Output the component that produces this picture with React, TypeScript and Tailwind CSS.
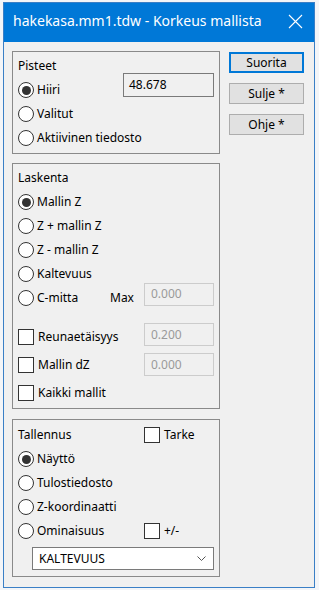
import React from "react";

const font = { fontFamily: '"Noto Sans", "Liberation Sans", sans-serif' };

const Radio = ({ checked, label }: { checked?: boolean; label: string }) => (
  <div className="flex items-center h-[24px]">
    <span className="w-[16px] h-[16px] rounded-full border border-[#333] bg-white flex items-center justify-center shrink-0">
      {checked && <span className="w-[9px] h-[9px] rounded-full bg-[#333]" />}
    </span>
    <span className="ml-[3px]">{label}</span>
  </div>
);

const Check = ({ label }: { label: string }) => (
  <div className="flex items-center">
    <span className="w-[16px] h-[16px] border border-[#333] bg-white shrink-0" />
    <span className="ml-[4px]">{label}</span>
  </div>
);

const DisabledBox = ({ value, className }: { value: string; className?: string }) => (
  <div
    className={
      "w-[70px] h-[23px] border border-[#cccccc] bg-[#f0f0f0] text-[#9a9a9a] pl-[6px] flex items-center " +
      (className ?? "")
    }
  >
    {value}
  </div>
);

const Button = ({ label, primary }: { label: string; primary?: boolean }) => (
  <div
    className={
      "w-[75px] h-[21px] bg-[#e1e1e1] flex items-center justify-center " +
      (primary ? "border-2 border-[#0078d7]" : "border border-[#adadad]")
    }
  >
    {label}
  </div>
);

export default function App() {
  return (
    <div
      className="w-[319px] h-[590px] bg-[#f3f5f8] pl-[3px] pt-[2px] text-[12px] text-black leading-none"
      style={font}
    >
      <div className="w-[312px] h-[586px] border border-[#3a7fc6] bg-[#f0f0f0] flex flex-col">
        {/* title bar */}
        <div className="h-[39px] bg-[#0078d7] flex items-center justify-between pl-[9px] pr-[11px] text-white">
          <span className="text-[14px] pb-[3px]">hakekasa.mm1.tdw - Korkeus mallista</span>
          <svg width="15" height="15" viewBox="0 0 15 15" className="mb-[3px]">
            <path d="M1 1 L14 14 M14 1 L1 14" stroke="white" strokeWidth="1.1" fill="none" />
          </svg>
        </div>

        <div className="flex pl-[8px] pt-[9px]">
          {/* left column */}
          <div className="w-[208px] flex flex-col">
            {/* Pisteet */}
            <div className="h-[103px] border border-[#8a8a8a] pl-[5px] pr-[5px] pt-[2px]">
              <div className="flex justify-between">
                <div className="flex flex-col">
                  <div className="h-[24px] flex items-center">Pisteet</div>
                  <Radio checked label="Hiiri" />
                </div>
                <div className="mt-[19px] w-[91px] h-[24px] border border-[#7a7a7a] bg-[#f0f0f0] pl-[5px] flex items-center">
                  48.678
                </div>
              </div>
              <Radio label="Valitut" />
              <Radio label="Aktiivinen tiedosto" />
            </div>

            {/* Laskenta */}
            <div className="mt-[9px] h-[246px] border border-[#8a8a8a] pl-[5px] pr-[5px] pt-[2px]">
              <div className="h-[24px] flex items-center">Laskenta</div>
              <Radio checked label="Mallin Z" />
              <Radio label="Z + mallin Z" />
              <Radio label="Z - mallin Z" />
              <Radio label="Kaltevuus" />
              <div className="flex items-center h-[24px]">
                <div className="w-[92px]">
                  <Radio label="C-mitta" />
                </div>
                <span className="w-[34px]">Max</span>
                <DisabledBox value="0.000" className="mt-[-8px]" />
              </div>
              <div className="mt-[13px] h-[28px] flex items-start justify-between">
                <div className="h-[28px] flex items-center">
                  <Check label="Reunaetäisyys" />
                </div>
                <DisabledBox value="0.200" />
              </div>
              <div className="h-[28px] flex items-start justify-between">
                <div className="h-[28px] flex items-center">
                  <Check label="Mallin dZ" />
                </div>
                <DisabledBox value="0.000" className="mt-[2px]" />
              </div>
              <div className="h-[28px] flex items-center">
                <Check label="Kaikki mallit" />
              </div>
            </div>

            {/* Tallennus */}
            <div className="mt-[10px] h-[158px] border border-[#8a8a8a] pl-[5px] pr-[5px] pt-[3px]">
              <div className="h-[24px] flex items-center">
                <span className="w-[126px]">Tallennus</span>
                <Check label="Tarke" />
              </div>
              <Radio checked label="Näyttö" />
              <Radio label="Tulostiedosto" />
              <Radio label="Z-koordinaatti" />
              <div className="h-[24px] flex items-center">
                <div className="w-[126px]">
                  <Radio label="Ominaisuus" />
                </div>
                <Check label="+/-" />
              </div>
              <div className="mt-[4px] ml-[14px] w-[182px] h-[23px] border border-[#7a7a7a] bg-white flex items-center justify-between pl-[6px] pr-[7px]">
                <span>KALTEVUUS</span>
                <svg width="9" height="6" viewBox="0 0 9 6">
                  <path d="M0.5 0.5 L4.5 4.5 L8.5 0.5" stroke="#555" strokeWidth="1" fill="none" />
                </svg>
              </div>
            </div>
          </div>

          {/* right column: buttons */}
          <div className="ml-[9px] pt-[1px] flex flex-col gap-[10px]">
            <Button primary label="Suorita" />
            <Button label="Sulje *" />
            <Button label="Ohje *" />
          </div>
        </div>
      </div>
    </div>
  );
}
